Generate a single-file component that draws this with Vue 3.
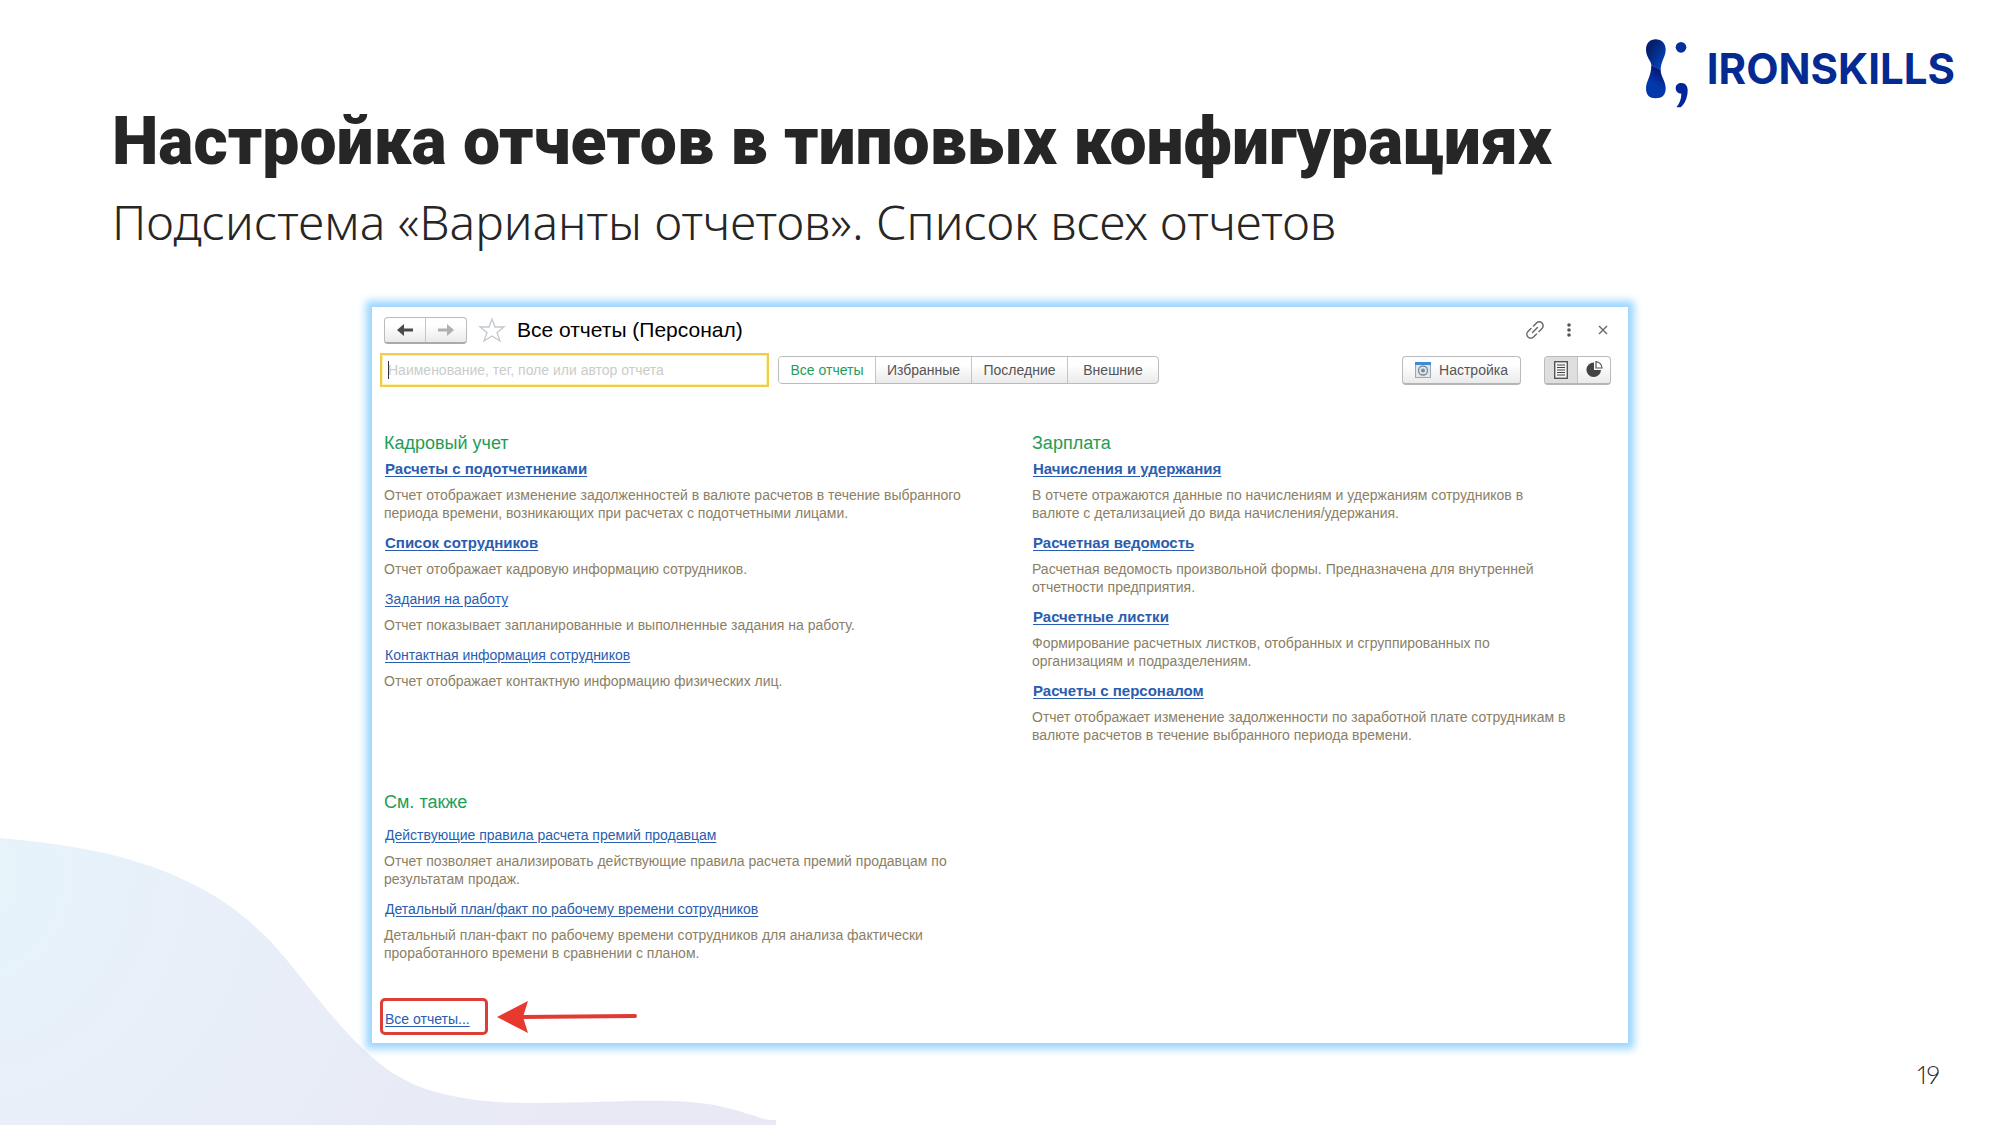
<script setup>
import { ref } from 'vue'

const tabs = ['Все отчеты', 'Избранные', 'Последние', 'Внешние']
const activeTab = ref(0)
const query = ref('')

const sections = [
  {
    title: 'Кадровый учет',
    items: [
      { name: 'Расчеты с подотчетниками', main: true, text: 'Отчет отображает изменение задолженностей в валюте расчетов в течение выбранного периода времени, возникающих при расчетах с подотчетными лицами.' },
      { name: 'Список сотрудников', main: true, text: 'Отчет отображает кадровую информацию сотрудников.' },
      { name: 'Задания на работу', text: 'Отчет показывает запланированные и выполненные задания на работу.' },
      { name: 'Контактная информация сотрудников', text: 'Отчет отображает контактную информацию физических лиц.' },
    ],
  },
  {
    title: 'Зарплата',
    items: [
      { name: 'Начисления и удержания', main: true, text: 'В отчете отражаются данные по начислениям и удержаниям сотрудников в валюте с детализацией до вида начисления/удержания.' },
      { name: 'Расчетная ведомость', main: true, text: 'Расчетная ведомость произвольной формы. Предназначена для внутренней отчетности предприятия.' },
      { name: 'Расчетные листки', main: true, text: 'Формирование расчетных листков, отобранных и сгруппированных по организациям и подразделениям.' },
      { name: 'Расчеты с персоналом', main: true, text: 'Отчет отображает изменение задолженности по заработной плате сотрудникам в валюте расчетов в течение выбранного периода времени.' },
    ],
  },
  {
    title: 'См. также',
    loose: true,
    items: [
      { name: 'Действующие правила расчета премий продавцам', text: 'Отчет позволяет анализировать действующие правила расчета премий продавцам по результатам продаж.' },
      { name: 'Детальный план/факт по рабочему времени сотрудников', text: 'Детальный план-факт по рабочему времени сотрудников для анализа фактически проработанного времени в сравнении с планом.' },
    ],
  },
]
</script>

<template>
  <main class="slide">
    <svg class="wave" viewBox="0 0 780 290" aria-hidden="true">
      <defs>
        <radialGradient id="waveFill" gradientUnits="userSpaceOnUse" cx="-40" cy="40" r="720">
          <stop offset="0" stop-color="#e6f4f9" />
          <stop offset="0.3" stop-color="#e8f0f9" />
          <stop offset="0.7" stop-color="#e8ebf6" />
          <stop offset="1" stop-color="#e9e8f5" />
        </radialGradient>
      </defs>
      <path fill="url(#waveFill)" d="M0 3C70 9 130 20 180 43C225 63 258 90 286 124C308 151 331 182 357 208C380 231 402 248 439 258C480 268 510 268 541 268C590 268 630 265 670 266C715 267 735 275 755 281C765 285 768 285 776 285V290H0Z" />
    </svg>

    <header class="head">
      <div class="titles">
        <h1>Настройка отчетов в типовых конфигурациях</h1>
        <p class="subtitle">Подсистема «Варианты отчетов». Список всех отчетов</p>
      </div>
      <div class="logo">
        <svg width="47" height="73" viewBox="70 50 141 219" aria-hidden="true">
          <defs>
            <linearGradient id="topBulb" x1="0" y1="0" x2="1" y2="1">
              <stop offset="0.25" stop-color="#04206f" />
              <stop offset="0.8" stop-color="#0540b4" />
            </linearGradient>
            <linearGradient id="lowBulb" x1="0.7" y1="0" x2="0.4" y2="1">
              <stop offset="0.05" stop-color="#06106b" />
              <stop offset="0.6" stop-color="#0338ab" />
            </linearGradient>
          </defs>
          <path fill="url(#topBulb)" d="M92 134C92 122 76 110 76 88C76 69 88 57 105 57C122 57 135 69 135 88C135 110 120 122 120 150Z" />
          <path fill="url(#lowBulb)" d="M92 134L120 149C120 168 135 182 135 204C135 225 124 234 105 234C87 234 76 225 76 204C76 182 92 168 92 134Z" />
          <circle cx="181" cy="81" r="16" fill="#03309d" />
          <path fill="#03259a" d="M165 203C165 194 172 188 182 188C195 188 201 198 201 210C201 232 192 252 180 261H167C176 250 182 237 182 220C172 220 165 213 165 203Z" />
        </svg>
        <span>IRONSKILLS</span>
      </div>
    </header>

    <section class="window">
      <div class="caption">
        <div class="nav">
          <button type="button" aria-label="Назад">
            <svg width="16" height="12" viewBox="0 0 16 12"><path d="M0 6L7 0V4.500H16V7.500H7V12Z" fill="#4a4a4a" /></svg>
          </button>
          <button type="button" aria-label="Вперед">
            <svg width="16" height="12" viewBox="0 0 16 12"><path d="M16 6L9 0V4.500H0V7.500H9V12Z" fill="#b0b0b0" /></svg>
          </button>
        </div>
        <button type="button" class="plain star" aria-label="В избранное">
          <svg width="28" height="26" viewBox="0 0 28 26"><path d="M14 2L17 10H26L19 15.500L22 24L14 19L6 24L9 15.500L2 10H11Z" fill="none" stroke="#c3c8ce" stroke-width="1.300" /></svg>
        </button>
        <h2>Все отчеты (Персонал)</h2>
        <div class="tools">
          <button type="button" class="plain" aria-label="Ссылка">
            <svg width="18" height="18" viewBox="0 0 18 18" fill="none" stroke="#6a6a6a" stroke-width="1.500" stroke-linecap="round"><path d="M7.500 5L10.500 2A3.500 3.500 0 0 1 16 7.500L13 10.500M10.500 13L7.500 16A3.500 3.500 0 0 1 2 10.500L5 7.500M6.500 11.500L11.500 6.500" /></svg>
          </button>
          <button type="button" class="plain" aria-label="Меню">
            <svg width="18" height="18" viewBox="0 0 18 18" fill="#555"><circle cx="9" cy="4" r="1.800" /><circle cx="9" cy="9" r="1.800" /><circle cx="9" cy="14" r="1.800" /></svg>
          </button>
          <button type="button" class="plain" aria-label="Закрыть">
            <svg width="18" height="18" viewBox="0 0 18 18" stroke="#666" stroke-width="1.400"><path d="M5 5L13 13M13 5L5 13" /></svg>
          </button>
        </div>
      </div>

      <div class="bar">
        <div class="search">
          <input v-model="query" type="text" aria-label="Поиск" placeholder="Наименование, тег, поле или автор отчета" />
          <i class="caret"></i>
        </div>
        <div class="tabs">
          <button v-for="(tab, i) in tabs" :key="tab" type="button" :class="{ active: i === activeTab }" @click="activeTab = i">{{ tab }}</button>
        </div>
        <button type="button" class="setup">
          <svg width="16" height="16" viewBox="0 0 16 16"><rect x="0.500" y="0.500" width="15" height="15" fill="#dfe6ec" stroke="#9aa9b5" /><rect width="16" height="3" fill="#3d8fd1" /><circle cx="8" cy="8.500" r="4.500" fill="none" stroke="#7d8b96" stroke-width="1.300" /><circle cx="8" cy="8.500" r="2" fill="#7d8b96" /></svg>
          Настройка
        </button>
        <div class="views">
          <button type="button" class="pressed" aria-label="Список">
            <svg width="14" height="18" viewBox="0 0 14 18"><rect x="0.700" y="0.700" width="12.600" height="16.600" fill="#f5f5f5" stroke="#555" stroke-width="1.400" /><path d="M3 4H11M3 6.500H11M3 9H11M3 11.500H11M3 14H11" stroke="#444" stroke-width="1.200" /></svg>
          </button>
          <button type="button" aria-label="Диаграмма">
            <svg width="17" height="17" viewBox="0 0 17 17"><path d="M8 1.500V9H15A7.300 7.300 0 1 1 8 1.500Z" fill="#444" /><path d="M10 0.700A6.500 6.500 0 0 1 16 7H10Z" fill="#fff" stroke="#555" stroke-width="1.200" /></svg>
          </button>
        </div>
      </div>

      <div class="sections">
        <section v-for="s in sections" :key="s.title" :class="{ loose: s.loose }">
          <h3>{{ s.title }}</h3>
          <article v-for="item in s.items" :key="item.name">
            <a href="#" :class="{ main: item.main }">{{ item.name }}</a>
            <p>{{ item.text }}</p>
          </article>
        </section>
      </div>

      <div class="all">
        <div class="frame"><a href="#">Все отчеты...</a></div>
        <svg width="142" height="34" viewBox="0 0 142 34" aria-hidden="true"><path d="M24 17L138 16" stroke="#e03b30" stroke-width="4" stroke-linecap="round" /><path d="M0 17L31 1L26 17L31 33Z" fill="#e8392e" /></svg>
      </div>
    </section>

    <footer>19</footer>
  </main>
</template>

<style>
body {
  margin: 0;
  background: #fff;
}
</style>

<style scoped>
.slide {
  position: relative;
  min-height: 100vh;
  box-sizing: border-box;
  overflow: hidden;
  color: #262626;
  font-family: "Liberation Sans", Arial, sans-serif;
}
.wave {
  position: absolute;
  left: 0;
  bottom: 0;
  width: 39%;
}
h1, h2, h3, p {
  margin: 0;
}
.head {
  display: flex;
  justify-content: space-between;
  align-items: flex-start;
  padding: 37px 45px 0 112px;
}
.titles {
  padding-top: 61px;
  white-space: nowrap;
}
h1 {
  font: 900 66px/88px Roboto, sans-serif;
}
.subtitle {
  font: 300 48px/72px "Noto Sans", sans-serif;
}
.logo {
  display: flex;
  align-items: center;
  gap: 16px;
  color: #032b92;
  font: 700 42px/64px Inter, sans-serif;
}
.logo span {
  align-self: flex-start;
}
.window {
  position: relative;
  width: 63%;
  max-width: 1256px;
  box-sizing: border-box;
  margin: 49px auto 0;
  padding: 8px 12px;
  background: #fff;
  box-shadow: 0 0 8px 6px #99d5ff;
}
button {
  font: 14px/18px "Liberation Sans", Arial, sans-serif;
  color: #555;
  padding: 0;
  margin: 0;
  border: 0;
  background: none;
  display: flex;
  align-items: center;
  justify-content: center;
}
.caption {
  display: flex;
  align-items: center;
  height: 30px;
}
.nav, .views, .tabs, .setup {
  box-sizing: border-box;
  border: 1px solid #bbb;
  border-radius: 4px;
  background: linear-gradient(#fff 30%, #eaeaea);
  overflow: hidden;
}
.nav {
  display: flex;
  width: 83px;
  height: 27px;
  border-bottom: 2px solid #aaa;
}
.nav button {
  flex: 1;
}
.nav button + button, .tabs button + button, .views button + button {
  border-left: 1px solid #c4c4c4;
}
.star {
  margin-left: 11px;
}
h2 {
  margin-left: 11px;
  font-size: 21px;
  line-height: 28px;
  font-weight: 400;
  color: #000;
}
.tools {
  display: flex;
  gap: 16px;
  margin-left: auto;
  padding-right: 4px;
}
.bar {
  display: flex;
  align-items: center;
  margin: 8px 5px 0 -4px;
}
.search {
  position: relative;
  width: 389px;
}
.search input {
  display: block;
  width: 100%;
  height: 34px;
  box-sizing: border-box;
  border: 2px solid #f2cb4e;
  outline: 1px solid #fbf3b0;
  outline-offset: -3px;
  padding: 0 6px;
  font: 14px "Liberation Sans", Arial, sans-serif;
}
.search input::placeholder {
  color: #cbcbcb;
  opacity: 1;
}
.caret {
  position: absolute;
  left: 8px;
  top: 8px;
  width: 1px;
  height: 18px;
  background: #333;
}
.tabs {
  display: flex;
  width: 381px;
  height: 28px;
  margin-left: 9px;
}
.tabs button {
  width: 96px;
}
.tabs button:last-child {
  flex: 1;
}
.tabs .active {
  background: #fff;
  color: #1f9d57;
}
.setup {
  gap: 8px;
  width: 119px;
  height: 29px;
  margin-left: auto;
  border-bottom: 2px solid #b5b5b5;
}
.views {
  display: flex;
  width: 67px;
  height: 29px;
  margin-left: 23px;
  border-bottom: 2px solid #b5b5b5;
}
.views button {
  flex: 1;
}
.views .pressed {
  background: #dedede;
}
.sections {
  display: grid;
  grid-template-columns: 608fr 536fr;
  column-gap: 40px;
  row-gap: 34px;
  margin-top: 44px;
  padding-right: 48px;
}
h3 {
  font-size: 18px;
  line-height: 24px;
  margin-bottom: 5px;
  font-weight: 400;
  color: #1f9d57;
}
.loose h3 {
  margin-bottom: 12px;
}
article {
  margin-bottom: 12px;
  line-height: 18px;
  font-size: 14px;
}
article p {
  margin-top: 8px;
  color: #8b8065;
}
a {
  display: block;
  width: fit-content;
  margin-left: 1px;
  color: #2a5db0;
  font-size: 14px;
  line-height: 18px;
  text-underline-offset: 2px;
}
.main {
  font-size: 15px;
  font-weight: 700;
}
.all {
  display: flex;
  align-items: center;
  gap: 9px;
  margin: 24px 0 0 -4px;
}
.frame {
  box-sizing: border-box;
  width: 108px;
  height: 37px;
  padding: 9px 0 0 1px;
  border: 3px solid #dc3f36;
  border-radius: 5px;
}
footer {
  position: absolute;
  right: 60px;
  bottom: 35px;
  font: 300 25px/32px Lato, sans-serif;
  font-variant-numeric: proportional-nums;
}
</style>
